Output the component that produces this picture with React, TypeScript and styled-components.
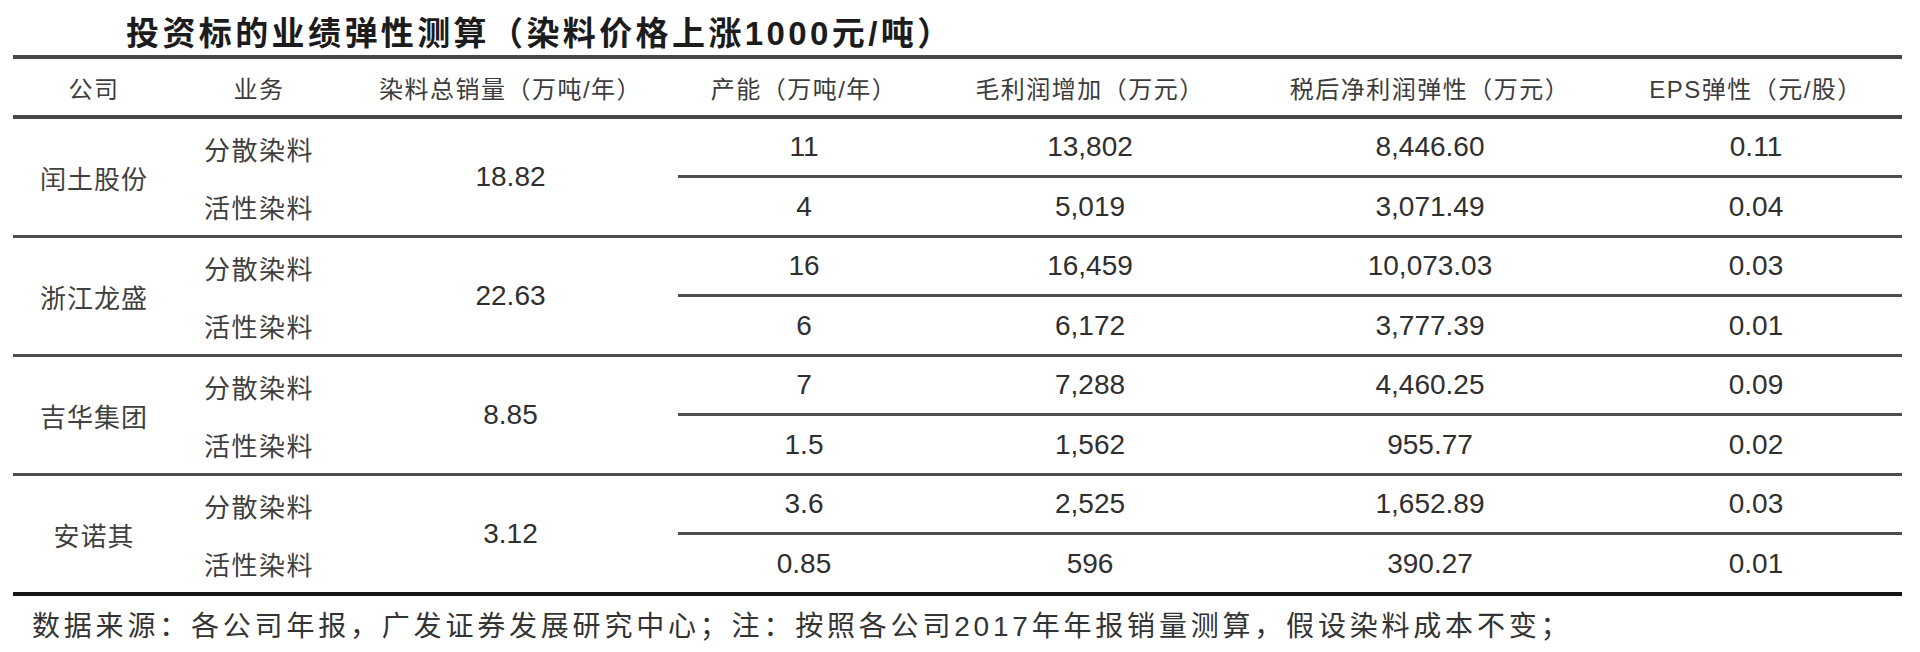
import styled, { createGlobalStyle } from "styled-components";

const GlobalStyle = createGlobalStyle`
  html, body {
    margin: 0;
    padding: 0;
    background: #ffffff;
  }
  body {
    width: 1920px;
    height: 652px;
    overflow: hidden;
    font-family: "Liberation Sans", "Noto Sans CJK SC", sans-serif;
    color: #333;
  }
`;

const COLS = "162px 168px 335px 252px 320px 360px 292px";
const CJK = `"Noto Sans CJK SC", "Liberation Sans", sans-serif`;
const MIXED = `"Liberation Sans", "Noto Sans CJK SC", sans-serif`;

type Row = { cap: string; gross: string; net: string; eps: string };
type Company = { name: string; total: string; rows: [Row, Row] };

const companies: Company[] = [
	{
		name: "闰土股份",
		total: "18.82",
		rows: [
			{ cap: "11", gross: "13,802", net: "8,446.60", eps: "0.11" },
			{ cap: "4", gross: "5,019", net: "3,071.49", eps: "0.04" },
		],
	},
	{
		name: "浙江龙盛",
		total: "22.63",
		rows: [
			{ cap: "16", gross: "16,459", net: "10,073.03", eps: "0.03" },
			{ cap: "6", gross: "6,172", net: "3,777.39", eps: "0.01" },
		],
	},
	{
		name: "吉华集团",
		total: "8.85",
		rows: [
			{ cap: "7", gross: "7,288", net: "4,460.25", eps: "0.09" },
			{ cap: "1.5", gross: "1,562", net: "955.77", eps: "0.02" },
		],
	},
	{
		name: "安诺其",
		total: "3.12",
		rows: [
			{ cap: "3.6", gross: "2,525", net: "1,652.89", eps: "0.03" },
			{ cap: "0.85", gross: "596", net: "390.27", eps: "0.01" },
		],
	},
];

const headers = [
	"公司",
	"业务",
	"染料总销量（万吨/年）",
	"产能（万吨/年）",
	"毛利润增加（万元）",
	"税后净利润弹性（万元）",
	"EPS弹性（元/股）",
];

const businesses = ["分散染料", "活性染料"];

function App() {
	return (
		<Page>
			<GlobalStyle />
			<Title>投资标的业绩弹性测算（染料价格上涨1000元/吨）</Title>
			<Table>
				<HeaderRow>
					{headers.map((h) => (
						<HeaderCell key={h}>{h}</HeaderCell>
					))}
				</HeaderRow>
				{companies.map((c, i) => (
					<Group key={c.name} $last={i === companies.length - 1}>
						<NameCell>{c.name}</NameCell>
						<TextCell>{businesses[0]}</TextCell>
						<NumCell $span>{c.total}</NumCell>
						<NumCell $line>{c.rows[0].cap}</NumCell>
						<NumCell $line>{c.rows[0].gross}</NumCell>
						<NumCell $line>{c.rows[0].net}</NumCell>
						<NumCell $line>{c.rows[0].eps}</NumCell>
						<TextCell>{businesses[1]}</TextCell>
						<NumCell>{c.rows[1].cap}</NumCell>
						<NumCell>{c.rows[1].gross}</NumCell>
						<NumCell>{c.rows[1].net}</NumCell>
						<NumCell>{c.rows[1].eps}</NumCell>
					</Group>
				))}
			</Table>
			<Footer>
				数据来源：各公司年报，广发证券发展研究中心；注：按照各公司2017年年报销量测算，假设染料成本不变；
			</Footer>
		</Page>
	);
}

export default App;

const Page = styled.div`
	width: 1920px;
	height: 652px;
	box-sizing: border-box;
	padding: 0 18px 0 13px;
	display: flex;
	flex-direction: column;
`;

const Title = styled.h1`
	margin: 0;
	height: 55px;
	box-sizing: border-box;
	display: flex;
	align-items: center;
	padding: 6px 0 0 113px;
	font-family: ${MIXED};
	font-size: 33px;
	font-weight: 700;
	letter-spacing: 3.4px;
	color: #1c1c1c;
	white-space: nowrap;
`;

const Table = styled.div`
	border-top: 4px solid #474747;
	display: flex;
	flex-direction: column;
`;

const HeaderRow = styled.div`
	display: grid;
	grid-template-columns: ${COLS};
	height: 56px;
	border-bottom: 4px solid #474747;
`;

const HeaderCell = styled.div`
	display: flex;
	align-items: center;
	justify-content: center;
	font-family: ${MIXED};
	font-size: 24px;
	letter-spacing: 1.5px;
	color: #3c3c3c;
	white-space: nowrap;
`;

const Group = styled.div<{ $last?: boolean }>`
	display: grid;
	grid-template-columns: ${COLS};
	grid-template-rows: 59px 57px;
	border-bottom: ${(p) => (p.$last ? "4px solid #141414" : "3px solid #4e4e4e")};
`;

const Cell = styled.div`
	display: flex;
	align-items: center;
	justify-content: center;
	box-sizing: border-box;
	white-space: nowrap;
`;

const NameCell = styled(Cell)`
	grid-row: span 2;
	font-family: ${CJK};
	font-size: 26px;
	letter-spacing: 1px;
	color: #3f3f3f;
`;

const TextCell = styled(Cell)`
	font-family: ${CJK};
	font-size: 26px;
	letter-spacing: 1.5px;
	color: #3f3f3f;
`;

const NumCell = styled(Cell)<{ $span?: boolean; $line?: boolean }>`
	font-family: ${MIXED};
	font-size: 28px;
	color: #2f2f2f;
	grid-row: ${(p) => (p.$span ? "span 2" : "auto")};
	border-bottom: ${(p) => (p.$line ? "3px solid #4e4e4e" : "none")};
`;

const Footer = styled.div`
	height: 56px;
	display: flex;
	align-items: center;
	padding-left: 19px;
	font-family: ${MIXED};
	font-size: 28px;
	letter-spacing: 3.8px;
	color: #333;
	white-space: nowrap;
`;
